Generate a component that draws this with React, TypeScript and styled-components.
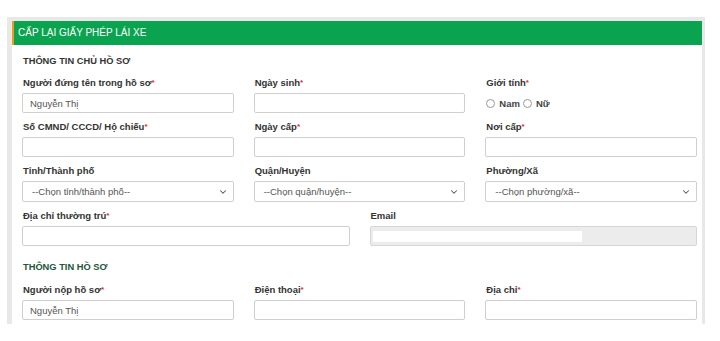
import { FC } from "react";
import styled, { createGlobalStyle } from "styled-components";
import { ChevronDown } from "lucide-react";

const GlobalStyle = createGlobalStyle`
  html, body {
    margin: 0;
    padding: 0;
    background: #fff;
    font-family: "Liberation Sans", Arial, sans-serif;
  }
`;

const Page = styled.div`
  width: 720px;
  height: 341px;
  overflow: hidden;
  padding: 17px 15px 0 7px;
  box-sizing: border-box;
`;

const Frame = styled.div`
  border-style: solid;
  border-color: #e8e8e8;
  border-width: 4px 3px 0 5px;
`;

const Header = styled.div`
  height: 24px;
  background: #0aa450;
  border-left: 2px solid #f39a1e;
  color: #fff;
  font-size: 10px;
  line-height: 24px;
  padding-left: 4px;
  text-transform: uppercase;
`;

const Body = styled.div`
  padding: 9px 5px 4px 10px;
`;

const SectionTitle = styled.div<{ $green?: boolean }>`
  font-size: 9.3px;
  font-weight: bold;
  line-height: 15px;
  color: ${(p) => (p.$green ? "#24563a" : "#333")};
  padding-left: 1px;
  margin: ${(p) => (p.$green ? "14px 0 7px" : "0 0 6px")};
`;

const Grid = styled.div<{ $cols: number }>`
  display: grid;
  grid-template-columns: repeat(${(p) => p.$cols}, 1fr);
  column-gap: 20px;
  margin-bottom: 6px;

  &:last-child {
    margin-bottom: 0;
  }
`;

const Field = styled.div`
  display: flex;
  flex-direction: column;
`;

const Label = styled.label`
  font-size: 9.5px;
  font-weight: bold;
  color: #333;
  line-height: 15px;
  padding-left: 1px;
  margin-bottom: 3px;
`;

const Req = styled.span`
  color: #e3262b;
  font-size: 8px;
  vertical-align: top;
`;

const TextBox = styled.input`
  box-sizing: border-box;
  height: 20px;
  width: 100%;
  border: 1px solid #cfcfcf;
  border-radius: 2px;
  padding: 0 7px;
  font-family: inherit;
  font-size: 9.5px;
  color: #555;
  background: #fff;
  outline: none;
`;

const SelectBox = styled.div`
  box-sizing: border-box;
  height: 21px;
  display: flex;
  align-items: center;
  justify-content: space-between;
  border: 1px solid #cfcfcf;
  border-radius: 2px;
  padding: 0 5px 0 9px;
  font-size: 9.5px;
  color: #555;
  background: #fff;
`;

const DisabledBox = styled.div`
  box-sizing: border-box;
  height: 20px;
  border: 1px solid #d6d6d6;
  border-radius: 2px;
  background: #ececec;
  padding: 4px 2px;
`;

const Masked = styled.div`
  width: 209px;
  height: 11px;
  background: #fff;
`;

const RadioGroup = styled.div`
  display: flex;
  align-items: center;
  height: 20px;
  gap: 3px;
  font-size: 9.5px;
  font-weight: bold;
  color: #444;
  padding-left: 1px;
`;

const Radio = styled.span`
  display: inline-block;
  width: 9px;
  height: 9px;
  border: 1px solid #999;
  border-radius: 50%;
  box-sizing: border-box;
  margin-right: 1px;
`;

const Chevron = styled(ChevronDown)`
  color: #555;
`;

const Text: FC<{ label: string; req?: boolean; value?: string }> = ({ label, req, value }) => (
  <Field>
    <Label>
      {label}
      {req && <Req>*</Req>}
    </Label>
    <TextBox readOnly value={value ?? ""} />
  </Field>
);

const Select: FC<{ label: string; placeholder: string }> = ({ label, placeholder }) => (
  <Field>
    <Label>{label}</Label>
    <SelectBox>
      <span>{placeholder}</span>
      <Chevron size={10} strokeWidth={2.5} />
    </SelectBox>
  </Field>
);

export default function App() {
  return (
    <Page>
      <GlobalStyle />
      <Frame>
        <Header>Cấp lại giấy phép lái xe</Header>
        <Body>
          <SectionTitle>THÔNG TIN CHỦ HỒ SƠ</SectionTitle>
          <Grid $cols={3}>
            <Text label="Người đứng tên trong hồ sơ" req value="Nguyễn Thị" />
            <Text label="Ngày sinh" req />
            <Field>
              <Label>
                Giới tính<Req>*</Req>
              </Label>
              <RadioGroup>
                <Radio /> Nam <Radio /> Nữ
              </RadioGroup>
            </Field>
          </Grid>
          <Grid $cols={3}>
            <Text label="Số CMND/ CCCD/ Hộ chiếu" req />
            <Text label="Ngày cấp" req />
            <Text label="Nơi cấp" req />
          </Grid>
          <Grid $cols={3}>
            <Select label="Tỉnh/Thành phố" placeholder="--Chọn tỉnh/thành phố--" />
            <Select label="Quận/Huyện" placeholder="--Chọn quận/huyện--" />
            <Select label="Phường/Xã" placeholder="--Chọn phường/xã--" />
          </Grid>
          <Grid $cols={2}>
            <Text label="Địa chỉ thường trú" req />
            <Field>
              <Label>Email</Label>
              <DisabledBox>
                <Masked />
              </DisabledBox>
            </Field>
          </Grid>
          <SectionTitle $green>THÔNG TIN HỒ SƠ</SectionTitle>
          <Grid $cols={3}>
            <Text label="Người nộp hồ sơ" req value="Nguyễn Thị" />
            <Text label="Điện thoại" req />
            <Text label="Địa chỉ" req />
          </Grid>
        </Body>
      </Frame>
    </Page>
  );
}
